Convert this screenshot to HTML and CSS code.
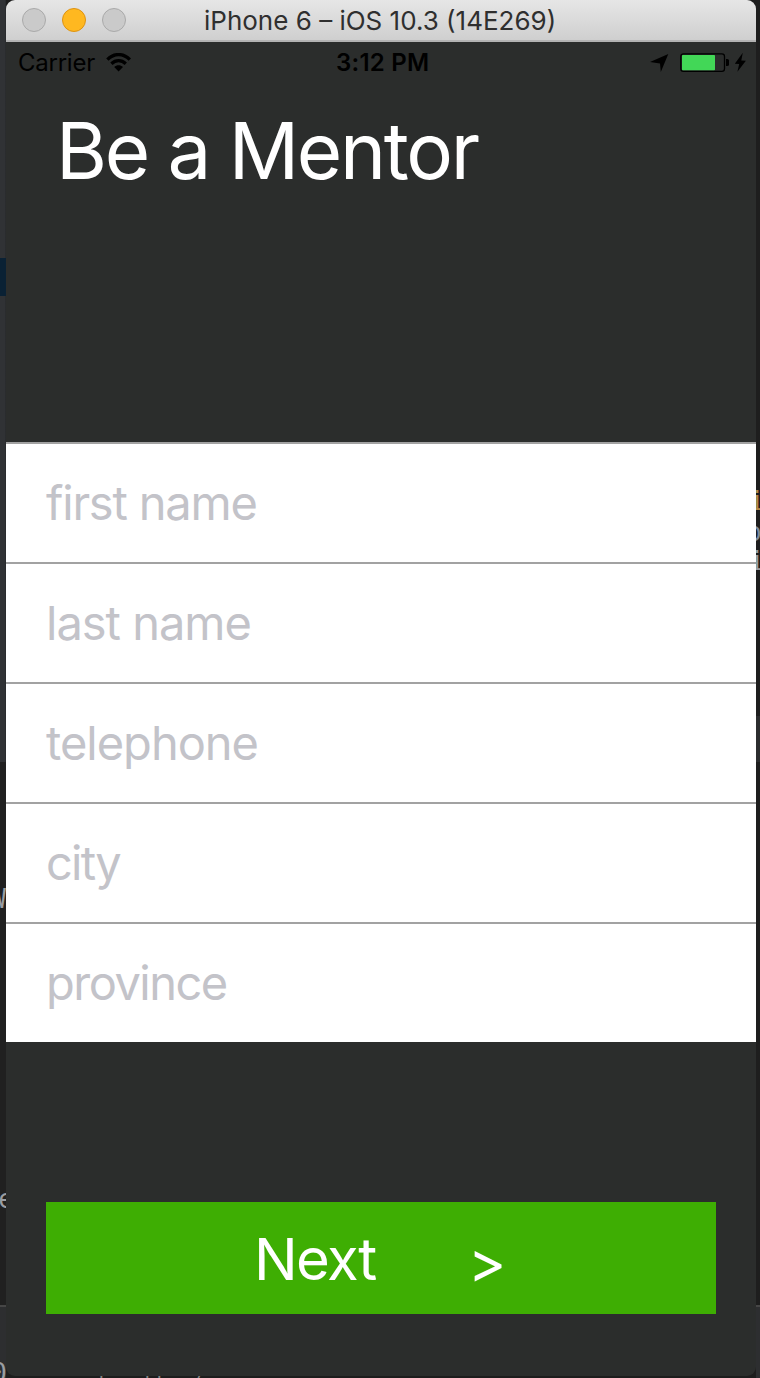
FILE: index.html
```html
<!DOCTYPE html>
<html lang="en">
<head>
<meta charset="utf-8">
<title>Be a Mentor</title>
<link rel="stylesheet" href="styles.css">
</head>
<body>
<div class="desktop">
  <div class="edge edge-left">
    <div class="selection"></div>
    <div class="editor"></div>
    <div class="panel"></div>
    <span class="code code-w">W</span>
    <span class="code code-e">e</span>
    <span class="code code-p">0</span>
  </div>
  <main class="window">
    <header class="titlebar">
      <span class="dot"></span><span class="dot dot-min"></span><span class="dot"></span>
      <span class="window-title">iPhone 6 – iOS 10.3 (14E269)</span>
    </header>
    <div class="statusbar">
      <div class="status-left">
        <span class="t-carrier">Carrier</span>
        <svg class="wifi" width="26" height="19" viewBox="0 0 26 19">
          <path d="M1.4 6.6C8-.1 17.2-.1 23.8 6.6" fill="none" stroke="#000" stroke-width="3.4"/>
          <path d="M5.4 10.7c4.3-4 10.1-4 14.4 0" fill="none" stroke="#000" stroke-width="3.3"/>
          <path d="M8.2 13.9c2.5-2.3 6.3-2.3 8.8 0L12.6 18.4z"/>
        </svg>
      </div>
      <span class="t-time">3:12 PM</span>
      <div class="status-right">
        <svg width="98" height="22" viewBox="0 0 98 22">
          <path d="M18.3 2 10.8 20 10 11.5 0 10z"/>
          <rect x="30.8" y="1.8" width="43.7" height="17.6" rx="2.6" fill="none" stroke="#000" stroke-width="1.3"/>
          <rect x="32" y="3" width="33" height="15.2" rx=".8" fill="#42d757"/>
          <path d="M76 7h1.3q1.7 0 1.7 1.5v4q0 1.5-1.7 1.5H76z"/>
          <path d="M92.8.7 84.8 11.8 89.2 12 87.4 19.8 95.9 8.8 91.3 8.6z"/>
        </svg>
      </div>
    </div>
    <h1 class="heading">Be a Mentor</h1>
    <div class="form">
      <div class="field"><span class="t-first">first name</span></div>
      <div class="field"><span class="t-last">last name</span></div>
      <div class="field"><span class="t-tel">telephone</span></div>
      <div class="field"><span class="t-city">city</span></div>
      <div class="field"><span class="t-prov">province</span></div>
    </div>
    <div class="next"><span class="t-next">Next</span><span class="t-arrow">&gt;</span></div>
  </main>
  <div class="edge edge-right">
    <div class="panel-mid"></div>
    <div class="panel"></div>
    <span class="code code-r1">i</span>
    <span class="code code-r2">p</span>
    <span class="code code-r3">i</span>
  </div>
  <div class="bottom-code">v, up, to, hbmm(</div>
</div>
</body>
</html>
```
FILE: styles.css
```css
body {
  margin: 0;
  font-family: Inter, "Liberation Sans", sans-serif;
}

.desktop {
  position: relative;
  display: flex;
  width: 760px;
  height: 1378px;
  overflow: hidden;
  background: #1d1d1d;
}

.edge {
  position: relative;
  flex: none;
  height: 1378px;
  overflow: hidden;
}

.edge-left {
  width: 6px;
  background: linear-gradient(90deg, #303235 80%, #252729);
}

.edge-right {
  width: 4px;
  background: #1e1e1e;
}

.selection {
  position: absolute;
  top: 258px;
  width: 6px;
  height: 38px;
  background: #0a2134;
}

.editor {
  position: absolute;
  top: 762px;
  width: 6px;
  height: 543px;
  background: #202020;
}

.panel {
  position: absolute;
  top: 1305px;
  width: 6px;
  height: 73px;
  box-sizing: border-box;
  border-top: 2px solid #464646;
  background: #2d2e30;
}

.panel-mid {
  position: absolute;
  top: 716px;
  width: 4px;
  height: 46px;
  background: #2c2d2e;
}

.code {
  position: absolute;
  color: #9a9da2;
  font: 26px/30px "DejaVu Sans Mono", monospace;
}

.code-w { top: 884px; right: 0; }
.code-e { top: 1184px; right: -8px; }
.code-p { top: 1358px; right: -1px; }
.code-r1 { top: 486px; left: -7px; color: #b58a48; }
.code-r2 { top: 517px; left: -10px; color: #7d8b9f; }
.code-r3 { top: 546px; left: -7px; }

.bottom-code {
  position: absolute;
  left: 10px;
  top: 1376px;
  height: 2px;
  overflow: hidden;
  color: #858585;
  font: 20px/12px "DejaVu Sans Mono", monospace;
  text-indent: 2px;
}

.window {
  display: flex;
  flex-direction: column;
  flex: none;
  width: 750px;
  height: 1376px;
  overflow: hidden;
  border-radius: 9px;
  background: #2b2d2c;
}

.titlebar {
  display: flex;
  align-items: center;
  gap: 16px;
  flex: none;
  height: 42px;
  box-sizing: border-box;
  padding: 0 16px;
  border-bottom: 2px solid #b3b3b3;
  background: linear-gradient(#e6e6e6, #cfcfcf);
}

.dot {
  width: 24px;
  height: 24px;
  box-sizing: border-box;
  border: 1px solid #a9a9a9;
  border-radius: 50%;
  background: #cacaca;
}

.dot-min {
  border-color: #dd9212;
  background: #ffb820;
}

.window-title {
  margin-left: 62px;
  padding-top: 2px;
  color: #2f2f2f;
  font-size: 26px;
  line-height: 38px;
  white-space: nowrap;
}

.statusbar {
  display: grid;
  grid-template-columns: 330px 1fr 106px;
  flex: none;
  height: 42px;
  padding-left: 12px;
  color: #000;
  font-size: 24px;
  line-height: 42px;
}

.status-left {
  display: flex;
  gap: 11px;
}

.t-carrier {
  width: 77px;
  letter-spacing: -0.25px;
}

.wifi {
  margin-top: 11px;
}

.t-time {
  margin-left: -12px;
  font-weight: 600;
  letter-spacing: 0.25px;
  white-space: nowrap;
}

.status-right svg {
  display: block;
  margin-top: 10px;
}

.heading {
  flex: none;
  height: 339px;
  margin: 19px 0 0 50px;
  color: #fff;
  font-size: 78px;
  font-weight: 400;
  letter-spacing: -2.3px;
  line-height: 95px;
  white-space: nowrap;
}

.form {
  display: flex;
  flex-direction: column;
  flex: none;
}

.field {
  height: 118px;
  padding-left: 40px;
  border-top: 2px solid #a2a2a2;
  background: #fff;
  color: #c3c3c9;
  font-size: 47px;
  line-height: 118px;
}

.t-first { letter-spacing: -1.2px; }
.t-last { letter-spacing: -1px; }
.t-tel { letter-spacing: -1px; }
.t-city { letter-spacing: -1.8px; }
.t-prov { letter-spacing: -1.5px; }

.next {
  display: flex;
  flex: none;
  height: 112px;
  margin: 160px 40px 0;
  padding-left: 208px;
  background: #3eae03;
  color: #fff;
  font-size: 58px;
  line-height: 115px;
}

.t-next {
  width: 214px;
  letter-spacing: -1.6px;
}

.t-arrow {
  font-size: 58px;
  line-height: 120px;
}
```
